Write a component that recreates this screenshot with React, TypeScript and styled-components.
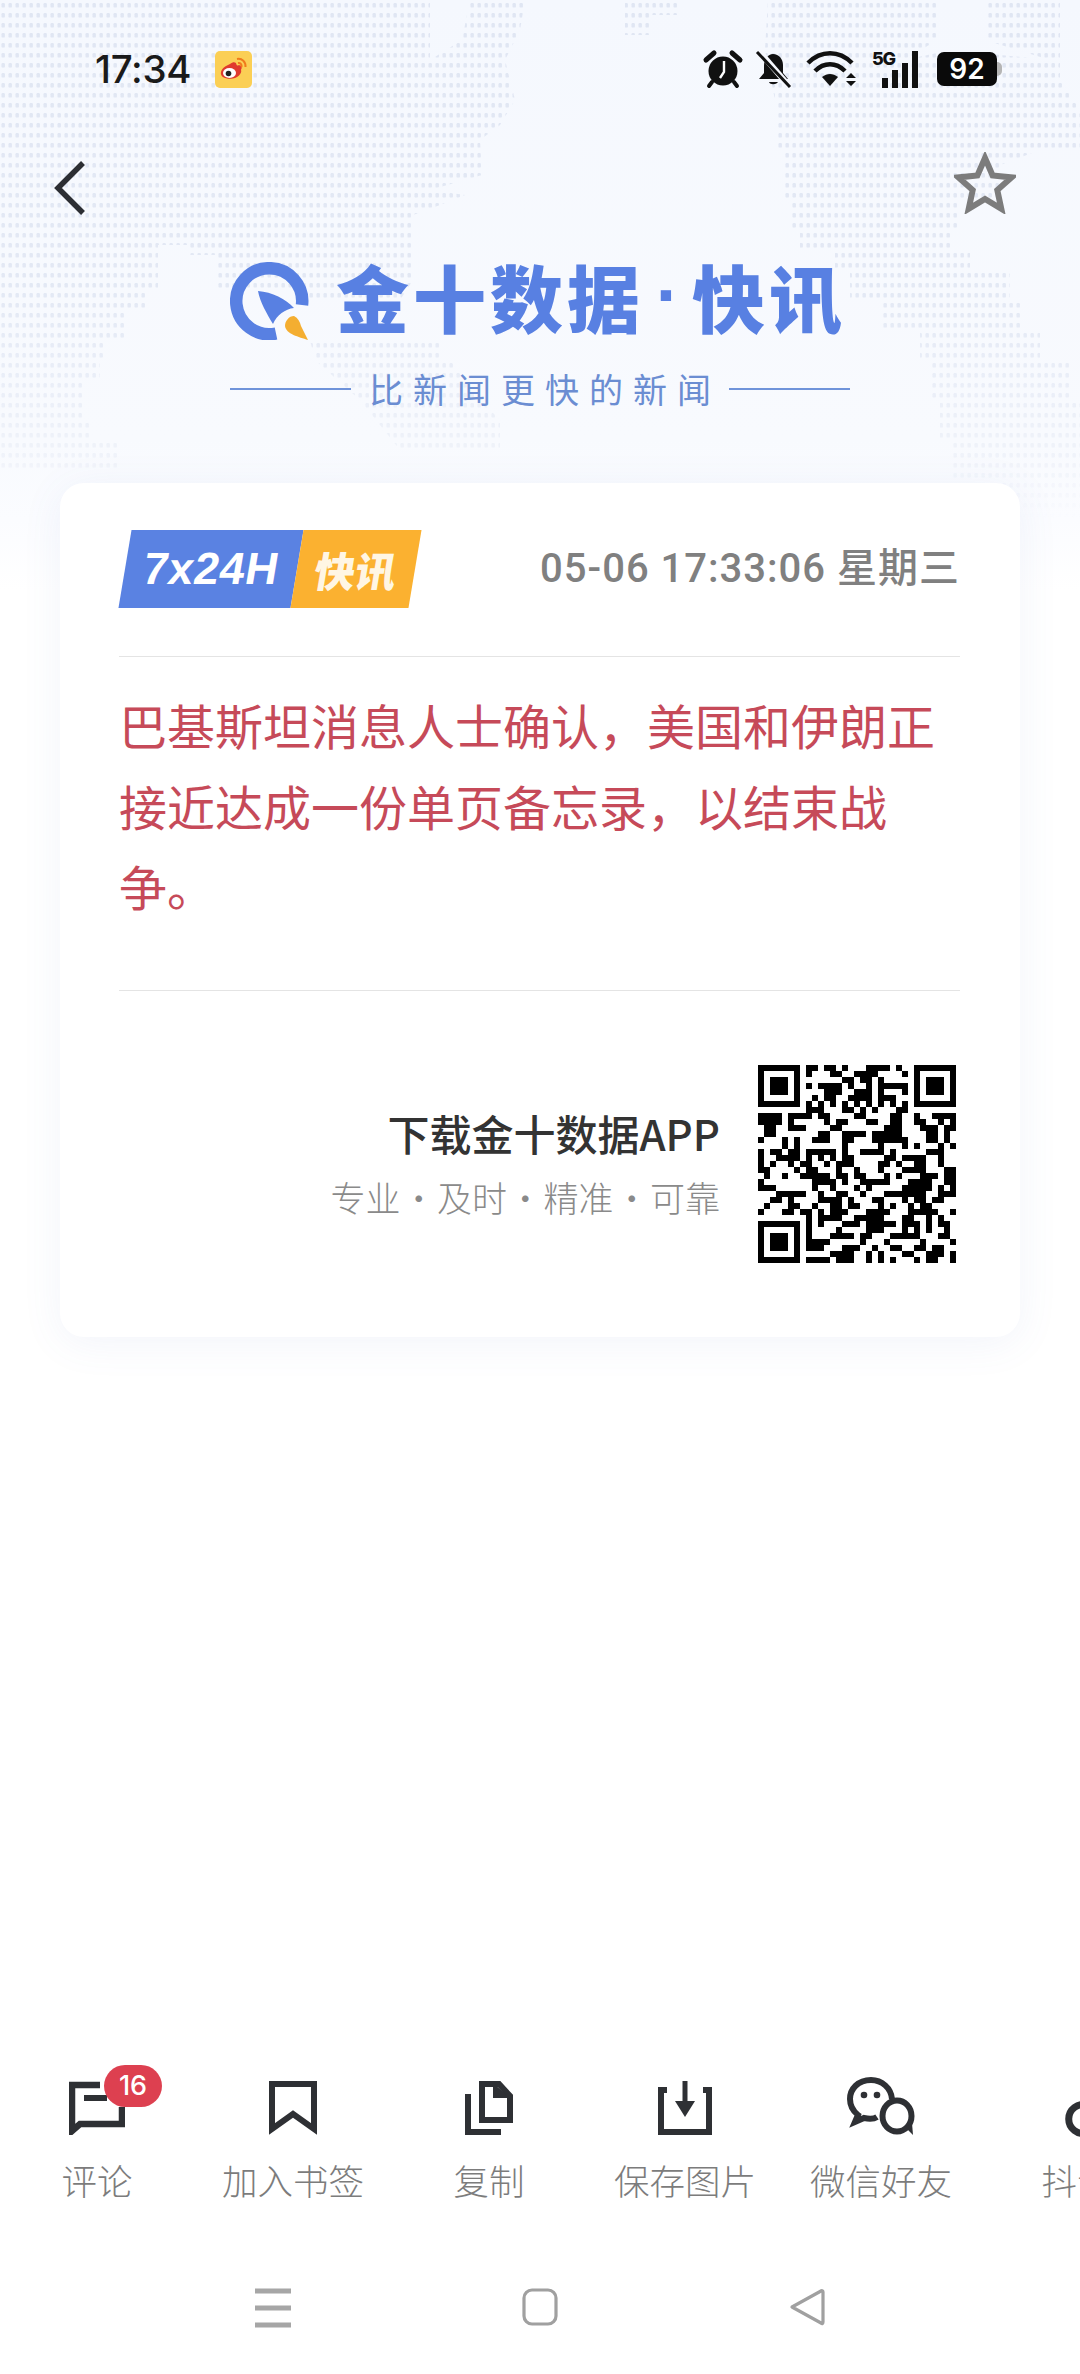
import React from "react";
import styled, { createGlobalStyle } from "styled-components";

const CJK = `"Noto Sans CJK SC", "Noto Sans", sans-serif`;

const Global = createGlobalStyle`
  html, body { margin: 0; padding: 0; background: #fff; }
  * { box-sizing: border-box; }
`;

const Page = styled.div`
  position: relative;
  width: 1080px;
  height: 2374px;
  overflow: hidden;
  display: flex;
  flex-direction: column;
  font-family: ${CJK};
  background: linear-gradient(180deg, #f5f8fe 0px, #f8fafe 440px, #fbfcff 520px, #ffffff 590px);
`;

const MapArt = styled.svg`
  position: absolute;
  left: 0;
  top: 0;
  width: 1080px;
  height: 520px;
`;

const Header = styled.header`
  position: relative;
  height: 484px;
  flex: none;
  display: flex;
  flex-direction: column;
`;

const StatusBar = styled.div`
  height: 38px;
  margin-top: 50px;
  display: flex;
  align-items: center;
  justify-content: space-between;
  padding: 0 83px 0 95px;
`;

const StatusLeft = styled.div`
  display: flex;
  align-items: center;
  gap: 24px;
`;

const Clock = styled.span`
  font-family: Inter, Roboto, sans-serif;
  font-size: 38.5px;
  font-weight: 500;
  line-height: 38px;
  letter-spacing: -0.3px;
  color: #1a1a1a;
`;

const StatusRight = styled.div`
  display: flex;
  align-items: center;
`;

const StatusIcon = styled.svg<{ $gap?: number }>`
  flex: none;
  overflow: visible;
  margin-right: ${(p) => p.$gap ?? 0}px;
`;

const Battery = styled.div`
  position: relative;
  width: 60px;
  height: 34px;
  margin-left: 17px;
  border-radius: 7px;
  background: #0a0a0a;
  color: #fff;
  font-family: Inter, Roboto, sans-serif;
  font-size: 28px;
  font-weight: 600;
  line-height: 34px;
  text-align: center;
  &::after {
    content: "";
    position: absolute;
    right: -5px;
    top: 10px;
    width: 5px;
    height: 14px;
    border-radius: 0 5px 5px 0;
    background: #b5b5b5;
  }
`;

const NavRow = styled.div`
  height: 60px;
  margin-top: 64px;
  display: flex;
  justify-content: space-between;
  padding: 0 64px 0 52px;
`;

const BackGlyph = styled.svg`
  margin-top: 8px;
`;

const LogoRow = styled.div`
  margin-top: 50px;
  margin-left: -4px;
  height: 78px;
  display: flex;
  align-items: center;
  justify-content: center;
`;

const LogoText = styled.div`
  margin: -12px 0 0 26px;
  display: flex;
  align-items: center;
  font-size: 73px;
  line-height: 78px;
  font-weight: 900;
  letter-spacing: 4px;
  color: #5880e2;
  white-space: nowrap;
`;

const LogoDot = styled.span`
  width: 48px;
  text-align: center;
  letter-spacing: 0;
  font-family: "Liberation Sans", sans-serif;
  font-weight: 700;
`;

const Tagline = styled.div`
  margin-top: 29px;
  display: flex;
  align-items: center;
  justify-content: center;
  gap: 18px;
`;

const TagRule = styled.span`
  width: 121px;
  height: 2px;
  background: #6f93da;
`;

const TagText = styled.span`
  font-size: 34px;
  line-height: 40px;
  font-weight: 400;
  letter-spacing: 10px;
  margin-right: -10px;
  color: #6b8dd2;
`;

const Card = styled.main`
  position: relative;
  margin: -1px 60px 0;
  padding: 47px 60px 74px 59px;
  background: #fff;
  border-radius: 24px;
  box-shadow: 0 6px 40px rgba(90, 120, 190, 0.08);
  flex: none;
`;

const CardHead = styled.div`
  display: flex;
  align-items: center;
  justify-content: space-between;
  padding-bottom: 48px;
  border-bottom: 1px solid #e4e4e4;
`;

const Flag = styled.div`
  display: flex;
  height: 78px;
  margin-left: 6px;
  transform: skewX(-9.5deg);
`;

const FlagPart = styled.div<{ $bg: string }>`
  display: flex;
  align-items: center;
  justify-content: center;
  height: 100%;
  background: ${(p) => p.$bg};
  color: #fff;
`;

const FlagLatin = styled(FlagPart)`
  width: 172px;
  font-family: "Liberation Sans", sans-serif;
  font-weight: 700;
  font-size: 45px;
  letter-spacing: 0.6px;
`;

const FlagCjk = styled(FlagPart)`
  width: 118px;
  font-size: 41px;
  font-weight: 900;
  color: #fff6e4;
`;

const Stamp = styled.div`
  font-family: Roboto, ${CJK};
  font-size: 40px;
  font-weight: 500;
  letter-spacing: 1px;
  line-height: 48px;
  color: #808080;
  white-space: pre;
`;

const Message = styled.p`
  margin: 0;
  padding: 27px 0 64px;
  font-size: 48px;
  line-height: 80.5px;
  color: #c64a59;
  border-bottom: 1px solid #e4e4e4;
`;

const Promo = styled.div`
  display: flex;
  align-items: center;
  justify-content: flex-end;
  gap: 38px;
  padding-top: 74px;
`;

const PromoText = styled.div`
  display: flex;
  flex-direction: column;
  align-items: flex-end;
  gap: 14px;
`;

const PromoTitle = styled.div`
  font-size: 42px;
  line-height: 52px;
  font-weight: 500;
  color: #333;
`;

const PromoSub = styled.div`
  font-size: 35px;
  line-height: 48px;
  font-weight: 300;
  word-spacing: -7px;
  color: #8a8a8a;
  white-space: pre;
`;

const QrGlyph = styled.svg`
  flex: none;
  margin-right: 4px;
`;

const Spacer = styled.div`
  flex: 1;
`;

const ActionBar = styled.nav`
  flex: none;
  height: 136px;
  margin-left: -1px;
  margin-bottom: 51px;
  display: flex;
`;

const Action = styled.div`
  position: relative;
  flex: none;
  width: 196px;
  display: flex;
  flex-direction: column;
  align-items: center;
`;

const IconSlot = styled.div`
  height: 68px;
  display: flex;
  align-items: flex-end;
  justify-content: center;
`;

const RingGlyph = styled.svg`
  margin-bottom: -3px;
`;

const ActionLabel = styled.div`
  margin-top: 25px;
  font-size: 35.5px;
  line-height: 40px;
  font-weight: 300;
  color: #7c7c7c;
  white-space: nowrap;
`;

const Count = styled.span`
  position: absolute;
  left: 105px;
  top: -2px;
  width: 58px;
  height: 42px;
  border-radius: 21px;
  background: #dd4050;
  color: #fff;
  font-family: Inter, Roboto, sans-serif;
  font-size: 27px;
  font-weight: 500;
  line-height: 42px;
  text-align: center;
`;

const SystemBar = styled.div`
  flex: none;
  height: 120px;
  display: flex;
  padding: 34px 0 0 255px;
`;

const SystemSlot = styled.div<{ $w: number }>`
  width: ${(p) => p.$w}px;
  flex: none;
`;

const QR_ROWS = [
  "#######.##.##.#...####.#..#######",
  "#.....#.#...##..####....#..#.....#",
  "#.###.#.......##.##.#......#.###.#",
  "#.###.#.#.####.#..#.#####..#.###.#",
  "#.###.#....###..###.#...#..#.###.#",
  "#.....#..#.##..####.###....#.....#",
  "#######.#.#.#.#.#.#.#.#.#..#######",
  "........###...##.#.#...##........",
  "####.####.##....##....##..#..####",
  "####.#.....#.##...##..##..##..#.#",
  ".##..###....##.......###...###.##",
  ".##.......##..####.#####....##.#.",
  "#...#.#..###..##...######...##.#.",
  "....#.#.......#.....#...#.#...#.#",
  "#.##.##.#####.#..####.#.....###..",
  "#..####.#.#.#.##.....##.####..#..",
  "#.#..#.##..#.###....##.#..##..#..",
  "##....#.##...#..#...#...####...##",
  ".#..#..#####.##.##...#.#...###.##",
  "#........####.#..#####...####..##",
  "###......#..#...#.#.....#####.#.#",
  "...#####..#..##..#...#######..###",
  "..##.#....####.#...##...#.##.##..",
  ".#...##..#..##.##...#.#..#.##....",
  "#...##.##.#.###...####...#####..#",
  "........#.####..#####...##..#.#..",
  "#######.#.#...###.#####.###.#.##.",
  "#.....#.#....#....###...#.#.#..#.",
  "#.###.#.#...####.##...#####...##",
  "#.###.#.####.....#...#.....#....#",
  "#.###.#.###...###..#..##..##.##..",
  "#.....#.....####..#.#...##..###.#",
  "#######.####.###..#.#.#...#.##..#",
];

function qrPath() {
  let d = "";
  QR_ROWS.forEach((row, y) => {
    const full = row.length > 33 ? row.slice(0, 26) + row.slice(-7) : row;
    [...full].forEach((c, x) => {
      if (c === "#") d += `M${x} ${y}h1v1h-1z`;
    });
  });
  return d;
}

const QrCode = () => (
  <QrGlyph width="198" height="198" viewBox="0 0 33 33" shapeRendering="crispEdges">
    <path d={qrPath()} fill="#000" />
  </QrGlyph>
);

const WorldDots = () => (
  <MapArt viewBox="0 0 1080 520">
    <defs>
      <pattern id="dots" width="7" height="10" patternUnits="userSpaceOnUse">
        <rect x="1.5" y="3" width="3.4" height="4.6" rx="1.2" fill="#e0e6f3" />
      </pattern>
      <linearGradient id="fade" x1="0" y1="0" x2="0" y2="1">
        <stop offset="0" stopColor="#fff" />
        <stop offset="0.55" stopColor="#fff" stopOpacity="0.9" />
        <stop offset="0.88" stopColor="#fff" stopOpacity="0.35" />
        <stop offset="1" stopColor="#fff" stopOpacity="0" />
      </linearGradient>
      <mask id="fadeMask">
        <rect width="1080" height="520" fill="url(#fade)" />
      </mask>
    </defs>
    <g fill="url(#dots)" mask="url(#fadeMask)">
      <path d="M0 0H430V60L462 40 470 0 525 0 520 30 505 60 515 100 500 125 480 140 482 175 430 190 465 195 440 205 413 215 413 245 413 280 400 300H300L290 290H215V255H190V245H158V290H145V310H125V340H105V360H100V380H85V420H90V440H120V470H0Z" />
      <path d="M310 340H440V360H450L480 400 500 420 500 450H400L360 400 315 360Z" />
      <path d="M625 0H680V15H650V35H625Z" />
      <path d="M768 0H937V40L905 60 950 50 1050 60 985 40V0H1060V80L1080 110V150H1040L1000 165V200H960V230H950V250H970V270H1010V300H1020V330H1040V360H1070V400H1080V520H950V440H940V400H930V360H920V330H880V300H850V270H835V250H800V230H790V200H785V150H775V100L765 50Z" />
    </g>
  </MapArt>
);

const Weibo = () => (
  <StatusIcon width="37" height="37" viewBox="0 0 37 37">
    <rect width="37" height="37" rx="5" fill="#fbcf55" />
    <path d="M15 13c3-2.500 6-2.500 6.500.500.300 1.200 1 1 2 .800 3-.500 4 2 2.500 4.500 1.500 4-4 9-10.500 9S5 25 6 21c.700-3.500 5-6.500 9-8z" fill="#e03a2e" />
    <ellipse cx="14.500" cy="22" rx="6.500" ry="5" fill="#fff" />
    <circle cx="13.500" cy="22.500" r="2.800" fill="#222" />
    <path d="M22 8c5-1 9 3 8.500 8M23 12c2.500-.500 4 1.500 3.500 4" fill="none" stroke="#f07a1c" strokeWidth="2" />
  </StatusIcon>
);

const Alarm = () => (
  <StatusIcon $gap={14} width="38" height="38" viewBox="0 0 38 38">
    <circle cx="19" cy="21" r="14.500" fill="#111" />
    <path d="M2 10 10 3M36 10 28 3" stroke="#111" strokeWidth="5" strokeLinecap="round" />
    <path d="M8 32 5 36M30 32l3 4" stroke="#111" strokeWidth="4" strokeLinecap="round" />
    <path d="M20 11v11l-4 6" stroke="#fff" strokeWidth="2.400" fill="none" />
  </StatusIcon>
);

const BellOff = () => (
  <StatusIcon $gap={14} width="36" height="36" viewBox="0 0 36 36">
    <path d="M17 3c6 0 10 5 10 11v8l5 6H3l5-6v-7c0-7 4-12 9-12z" fill="#111" />
    <path d="M13 31c1 3 7 3 9 0z" fill="#111" />
    <path d="M3 0 33 35" stroke="#f6f8fe" strokeWidth="6" />
    <path d="M1 1 34 36" stroke="#111" strokeWidth="3" />
  </StatusIcon>
);

const Wifi = () => (
  <StatusIcon $gap={14} width="52" height="36" viewBox="0 0 52 36">
    <path d="M2 12C15-1 33-1 46 12" stroke="#111" strokeWidth="4.500" fill="none" />
    <path d="M9 20C18 11 30 11 39 20" stroke="#111" strokeWidth="4.500" fill="none" />
    <path d="M16 26c5-4 11-4 16 0l-8 9z" fill="#111" />
    <path d="M40 27l5-5 5 5zM40 30l5 5 5-5z" fill="#111" />
  </StatusIcon>
);

const Signal = () => (
  <StatusIcon width="48" height="38" viewBox="0 0 48 38">
    <text x="0" y="15" fontFamily="Inter, Roboto, sans-serif" fontSize="18" fontWeight="800" letterSpacing="-1.200" fill="#111">5G</text>
    <rect x="10" y="28" width="6" height="10" fill="#111" />
    <rect x="20" y="20" width="6" height="18" fill="#111" />
    <rect x="30" y="13" width="6" height="25" fill="#111" />
    <rect x="40" y="1" width="6" height="37" fill="#111" />
  </StatusIcon>
);

const Back = () => (
  <BackGlyph width="34" height="56" viewBox="0 0 34 56">
    <path d="M31 3 6 28l25 25" fill="none" stroke="#2c2e33" strokeWidth="5.500" />
  </BackGlyph>
);

const Star = () => (
  <svg width="62" height="62" viewBox="0 0 62 62">
    <path d="M31 6l7.600 17.500 18.900 1.900-14.200 12.700 4 18.700L31 47l-16.300 9.800 4-18.700L4.500 25.400l18.900-1.900z" fill="none" stroke="#7c7c7c" strokeWidth="6" />
  </svg>
);

const LogoMark = () => (
  <svg width="80" height="78" viewBox="0 0 80 78">
    <path d="M46 71.500A33 33 0 1 1 72 43" fill="none" stroke="#5880e2" strokeWidth="12.500" />
    <path d="M28 29c14 1 28 8 36 17-9 1-17 7-21 16-6-10-13-22-15-33z" fill="#5880e2" />
    <path d="M64 54c4 2 6 6 7 10l7 14c-9-3-22-6-23-14 0-5 4-10 9-10z" fill="#f4ae31" />
  </svg>
);

const CommentIcon = () => (
  <svg width="56" height="54" viewBox="0 0 56 54">
    <path d="M31 4H3V50L11 43H53V26" fill="none" stroke="#2e3034" strokeWidth="6.500" />
    <path d="M15 17H38" stroke="#2e3034" strokeWidth="6" />
  </svg>
);

const BookmarkIcon = () => (
  <svg width="48" height="54" viewBox="0 0 48 54">
    <path d="M3 3H45V48L24 33 3 48Z" fill="none" stroke="#2e3034" strokeWidth="6" />
  </svg>
);

const CopyIcon = () => (
  <svg width="48" height="54" viewBox="0 0 48 54">
    <path d="M17 3H34L45 15V39H17Z" fill="none" stroke="#2e3034" strokeWidth="6" />
    <path d="M28 2V17H45" fill="#2e3034" />
    <path d="M3 13V51H36" fill="none" stroke="#2e3034" strokeWidth="6" />
  </svg>
);

const SaveIcon = () => (
  <svg width="54" height="54" viewBox="0 0 54 54">
    <path d="M3 6V51H51V6" fill="none" stroke="#2e3034" strokeWidth="6" />
    <path d="M3 9H9M45 9H51" stroke="#2e3034" strokeWidth="6" />
    <path d="M27 0V24" stroke="#2e3034" strokeWidth="5" />
    <path d="M17 20H37L27 36Z" fill="#2e3034" />
  </svg>
);

const WechatIcon = () => (
  <svg width="68" height="58" viewBox="0 0 68 58">
    <path d="M24 3C11 3 3 12 3 22c0 7 3 12 8 16l-3 7 9-4c5 1 10 1 13-1" fill="none" stroke="#2e3034" strokeWidth="6" />
    <path d="M24 3c11 0 20 8 21 19" fill="none" stroke="#2e3034" strokeWidth="6" />
    <circle cx="17" cy="18" r="3.300" fill="#2e3034" />
    <circle cx="30" cy="18" r="3.300" fill="#2e3034" />
    <ellipse cx="50" cy="39" rx="14.500" ry="15.500" fill="none" stroke="#2e3034" strokeWidth="6" />
    <path d="M58 50l8 8-1-12z" fill="#2e3034" />
  </svg>
);

const RingIcon = () => (
  <RingGlyph width="46" height="38" viewBox="0 0 46 38">
    <path d="M33 5A14.500 14.500 0 1 0 33 33" fill="none" stroke="#2e3034" strokeWidth="7" />
  </RingGlyph>
);

const NavMenu = () => (
  <svg width="36" height="40" viewBox="0 0 36 40">
    <path d="M0 3H36M0 20H36M0 37H36" stroke="#a6a6a6" strokeWidth="5" />
  </svg>
);

const NavHome = () => (
  <svg width="36" height="38" viewBox="0 0 36 38">
    <rect x="2" y="2" width="32" height="34" rx="8" fill="none" stroke="#a0a0a0" strokeWidth="3.200" />
  </svg>
);

const NavBack = () => (
  <svg width="36" height="38" viewBox="0 0 36 38">
    <path d="M32 3C33 2 34 3 34 4V34C34 36 33 36 32 35L3 19Z" fill="none" stroke="#a0a0a0" strokeWidth="3.200" strokeLinejoin="round" />
  </svg>
);

export default function App() {
  return (
    <Page>
      <Global />
      <WorldDots />
      <Header>
        <StatusBar>
          <StatusLeft>
            <Clock>17:34</Clock>
            <Weibo />
          </StatusLeft>
          <StatusRight>
            <Alarm />
            <BellOff />
            <Wifi />
            <Signal />
            <Battery>92</Battery>
          </StatusRight>
        </StatusBar>
        <NavRow>
          <Back />
          <Star />
        </NavRow>
        <LogoRow>
          <LogoMark />
          <LogoText>
            金十数据
            <LogoDot>·</LogoDot>
            快讯
          </LogoText>
        </LogoRow>
        <Tagline>
          <TagRule />
          <TagText>比新闻更快的新闻</TagText>
          <TagRule />
        </Tagline>
      </Header>
      <Card>
        <CardHead>
          <Flag>
            <FlagLatin $bg="#5a82e2">7x24H</FlagLatin>
            <FlagCjk $bg="#fbb130">快讯</FlagCjk>
          </Flag>
          <Stamp>05-06 17:33:06 星期三</Stamp>
        </CardHead>
        <Message>巴基斯坦消息人士确认，美国和伊朗正接近达成一份单页备忘录，以结束战争。</Message>
        <Promo>
          <PromoText>
            <PromoTitle>下载金十数据APP</PromoTitle>
            <PromoSub>专业 · 及时 · 精准 · 可靠</PromoSub>
          </PromoText>
          <QrCode />
        </Promo>
      </Card>
      <Spacer />
      <ActionBar>
        <Action>
          <IconSlot><CommentIcon /></IconSlot>
          <Count>16</Count>
          <ActionLabel>评论</ActionLabel>
        </Action>
        <Action>
          <IconSlot><BookmarkIcon /></IconSlot>
          <ActionLabel>加入书签</ActionLabel>
        </Action>
        <Action>
          <IconSlot><CopyIcon /></IconSlot>
          <ActionLabel>复制</ActionLabel>
        </Action>
        <Action>
          <IconSlot><SaveIcon /></IconSlot>
          <ActionLabel>保存图片</ActionLabel>
        </Action>
        <Action>
          <IconSlot><WechatIcon /></IconSlot>
          <ActionLabel>微信好友</ActionLabel>
        </Action>
        <Action>
          <IconSlot><RingIcon /></IconSlot>
          <ActionLabel>抖音</ActionLabel>
        </Action>
      </ActionBar>
      <SystemBar>
        <SystemSlot $w={267}><NavMenu /></SystemSlot>
        <SystemSlot $w={267}><NavHome /></SystemSlot>
        <SystemSlot $w={60}><NavBack /></SystemSlot>
      </SystemBar>
    </Page>
  );
}
